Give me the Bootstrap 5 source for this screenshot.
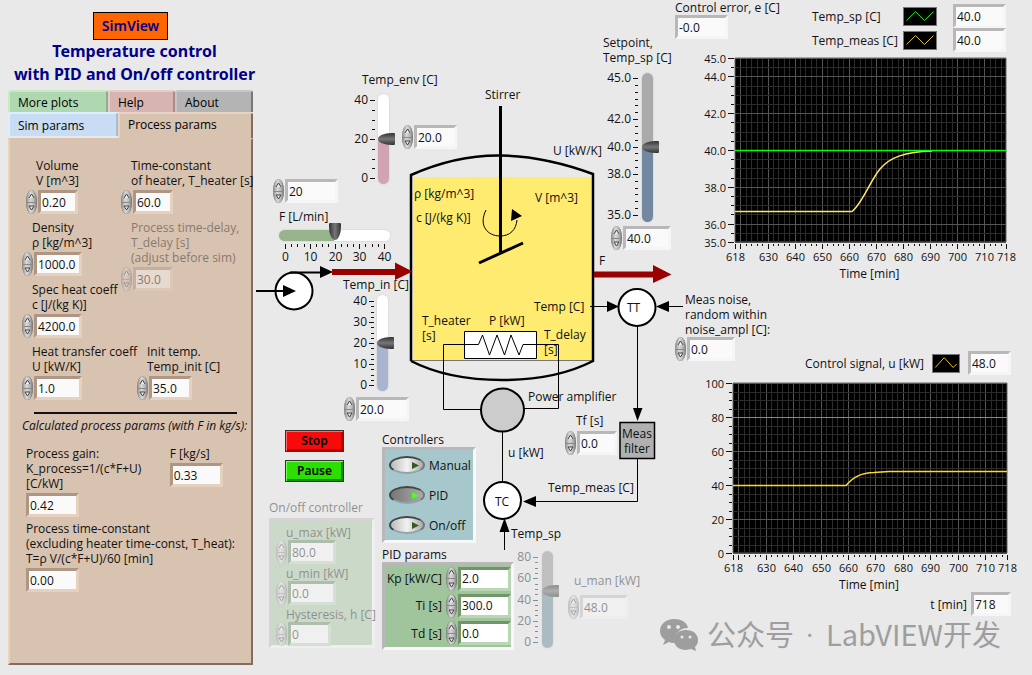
<!DOCTYPE html>
<html lang="en">
<head>
<meta charset="utf-8">
<meta name="viewport" content="width=device-width, initial-scale=1">
<title>SimView – Temperature control</title>
<link href="https://cdn.jsdelivr.net/npm/bootstrap@5.3.0/dist/css/bootstrap.min.css" rel="stylesheet">
<style>
:root{--hi:#f6f6f6;--lo:#b8b8b8;--face:#fafafa}
body{background:#e9e9e9;color:#111;font:12px/15px "Open Sans","Noto Sans",sans-serif}
label,legend,text{white-space:nowrap}
legend{font-size:12px;line-height:15px;float:none;margin:0}
svg text{font:12px "Open Sans","Noto Sans",sans-serif;fill:#111}
svg .tick{font-size:11px}
.simulator{display:grid;grid-template-columns:261px 414px minmax(0,1fr);min-height:100vh}

/* title and tabs */
.masthead{padding-top:12px}
.brand-tag{background:#f60;border:1px solid #000;color:#00008b;font:600 14px/26px "Noto Sans","Open Sans",sans-serif;width:75px}
.headline{color:#00008b;font:700 16px/23px "Noto Sans",sans-serif;white-space:nowrap}
.tab-btn{border:2px solid;border-bottom:0;text-align:left;padding:0 8px;height:22px;line-height:19px;border-radius:3px 3px 0 0}
.tab-green{background:#b0d8b0;border-color:#c8e8c8 #8cb08c #c8e8c8 #c8e8c8;width:100px}
.tab-pink{background:#d8b4b0;border-color:#e8ccca #ac8c8a #e8ccca #e8ccca;width:67px}
.tab-gray{background:#b4b4b4;border-color:#c6c6c6 #777 #c6c6c6 #c6c6c6;flex:1}
.tab-blue{background:#c8dcf4;border-color:#def #a8bcd8 #def #def;width:110px;height:24px}
.tab-tan{background:#d8c2b0;border-color:#e8d2c2 #846c60 #e8d2c2 #e8d2c2;flex:1;height:26px;padding-bottom:4px}
.tab-face{background:#d8c2b0;border:2px solid;border-color:#d8c2b0 #846c60 #846c60 #e8d2c2;--hi:#e6d0be;--lo:#ad9683;min-height:527px}
.params{display:grid;grid-template-columns:99px 1fr;row-gap:6px;padding-top:18px}
.params .num{margin-top:2px}
.tall{grid-row:span 2}
.rule{border-top:2px solid #111;opacity:1;margin:12px 14px 4px 24px}
.results{margin-top:13px}
.results .readout{margin-top:2px}

/* numeric field */
.num{display:flex;align-items:center;gap:1px}
.num input,.readout{border:3px solid;border-color:var(--lo) var(--hi) var(--hi) var(--lo);background:var(--face);height:24px;padding:0 0 0 1px;color:#111;min-width:0;font-size:12px;line-height:18px;border-radius:0}
.spin{display:flex;flex-direction:column;width:11px;height:24px;flex:none;border-radius:50%;overflow:hidden;background:linear-gradient(90deg,#8c8c8c,#d8d8d8 40%,#bbb 70%,#777);box-shadow:inset 0 0 1px #555}
.spin button{border:0;background:none;flex:1;padding:0;line-height:0}
.spin button+button{border-top:1px solid #888}
.spin svg{width:7px;height:6px}
.w40{width:40px}.w43{width:43px}.w48{width:48px}.w53{width:53px}
.off{opacity:.42}
.lbl{padding-left:10px}

/* buttons and panels */
.act{width:59px;height:22px;border:1px solid #333;font:600 12px/18px "Noto Sans","Open Sans",sans-serif;padding:0}
.act-stop{background:#f80a0a;box-shadow:inset 1px 1px #ff6a6a,inset -2px -2px #a80000}
.act-pause{background:#2be000;box-shadow:inset 1px 1px #7bff5c,inset -2px -2px #168c00}
.bevel{border:3px solid;border-color:#b8b8b8 #f8f8f8 #f8f8f8 #b8b8b8}
.bench{padding:430px 0 0 8px;gap:7px}
.bench-a{width:106px}
.bench-b{padding-top:2px}
.ctl{background:#a6c8cc;width:94px;height:96px}
.pid{background:#a0c49c;width:132px;height:88px;--lo:#6f9569;--hi:#b9d6b5;--face:#fff}
.onoff-set{margin-top:18px}
.onoff{background:#a0c49c;height:130px;margin-top:3px;--lo:#5f8559;--hi:#b9d6b5}
.onoff .num{margin-bottom:2px}
.sw{appearance:none;width:36px;height:18px;margin:0;border-radius:50%;border:2px solid;border-color:#444 #777 #8fa5a8 #444;background:url("data:image/svg+xml,%3Csvg xmlns='http://www.w3.org/2000/svg' viewBox='0 0 8 8'%3E%3Cpath d='M0 0L8 4L0 8z' fill='%23345a20'/%3E%3C/svg%3E") 21px 4px/7px 7px no-repeat,linear-gradient(90deg,#bbb,#f2f2f2 50%,#aaa)}
.sw:checked{background:url("data:image/svg+xml,%3Csvg xmlns='http://www.w3.org/2000/svg' viewBox='0 0 8 8'%3E%3Cpath d='M0 0L8 4L0 8z' fill='%234cff20'/%3E%3C/svg%3E") 21px 4px/7px 7px no-repeat,linear-gradient(90deg,#777,#aaa)}

/* process diagram: free canvas */
.canvas-svg{position:absolute;left:0;top:0;width:414px;height:675px;overflow:visible;pointer-events:none}
.pin{position:absolute}
.p-env{left:141px;top:125px}.p-f{left:12px;top:179px}.p-tin{left:83px;top:397px}
.p-sp{left:350px;top:226px}.p-tf{left:304px;top:431px}.p-man{left:307px;top:595px}
.l-env{left:101px;top:72px}.l-f{left:18px;top:209px}.l-tin{left:82px;top:277px}
.l-sp{left:342px;top:35px}.l-tf{left:315px;top:413px}.l-man{left:313px;top:573px}
.slide{appearance:none;height:11px;border-radius:6px;background:linear-gradient(90deg,var(--fill) 50%,var(--rest,#fff) 50%);box-shadow:0 0 1px 1px #ddd;margin:0}
.slide::-webkit-slider-thumb{appearance:none;width:12px;height:17px;background:linear-gradient(90deg,#333,#777 50%,#333);border-radius:50% 50% 1px 1px/80% 80% 1px 1px;margin-top:5px}
.upright{transform-origin:0 0;transform:rotate(-90deg)}
.s-env{left:117px;top:184px;width:90px;--fill:#d0a4b4}
.s-tin{left:116px;top:391px;width:96px;--fill:#a8b4d0}
.s-sp{left:381px;top:222px;width:149px;--fill:#7288a0;--rest:#aaa}
.s-man{left:281px;top:648px;width:97px;--fill:#708c9c;--rest:#999;opacity:.5;background:linear-gradient(90deg,var(--fill) 60%,var(--rest) 60%)}
.s-f{left:18px;top:230px;width:111px;--fill:#98b48c}
.s-f::-webkit-slider-thumb{border-radius:1px 1px 50% 50%/1px 1px 80% 80%;margin-top:-8px}

/* charts */
.plots{padding-right:26px}
.legend-grid{display:grid;grid-template-columns:91px 34px 69px;align-items:center}
.swatch{background:#000;border:1px solid #777;width:34px;height:19px;display:block}
.swatch-sm{width:28px}
.plot{display:block;width:calc(100% + 26px);height:auto;overflow:visible}
.noise{padding-top:7px;height:94px}
.wider{margin-right:-5px}
.watermark{position:absolute;right:31px;top:614px;color:#9e9e9e;font:29px/38px "Noto Sans CJK SC",sans-serif;pointer-events:none;white-space:pre}
.dot{font-family:Roboto,sans-serif;padding:0 5px}
</style>
</head>
<body>
<main class="simulator position-relative">

  <aside class="ps-2">
    <div class="masthead d-flex flex-column align-items-center">
      <div class="brand-tag text-center me-2">SimView</div>
      <h1 class="headline text-center mb-0">Temperature control<br>with PID and On/off controller</h1>
    </div>
    <div role="tablist" class="tabs pe-2">
      <div class="d-flex mt-1">
        <button class="tab-btn tab-green" role="tab">More plots</button>
        <button class="tab-btn tab-pink" role="tab">Help</button>
        <button class="tab-btn tab-gray" role="tab">About</button>
      </div>
      <div class="d-flex">
        <button class="tab-btn tab-blue" role="tab">Sim params</button>
        <button class="tab-btn tab-tan" role="tab" aria-selected="true">Process params</button>
      </div>
      <div class="tab-face" role="tabpanel">
        <div class="params ps-2 ms-1">
          <div class="ms-1"><label class="lbl" for="vol">Volume<br>V [m^3]</label><div class="num"><input id="vol" class="w40" value="0.20"></div></div>
          <div><label class="lbl" for="thea">Time-constant<br>of heater, T_heater [s]</label><div class="num"><input id="thea" class="w40" value="60.0"></div></div>
          <div><label class="lbl" for="den">Density<br>ρ [kg/m^3]</label><div class="num"><input id="den" class="w48" value="1000.0"></div></div>
          <div class="tall off"><label class="lbl" for="tdel">Process time-delay,<br>T_delay [s]<br>(adjust before sim)</label><div class="num"><input id="tdel" class="w40" value="30.0" disabled></div></div>
          <div><label class="lbl" for="spec">Spec heat coeff<br>c [J/(kg K)]</label><div class="num"><input id="spec" class="w48" value="4200.0"></div></div>
          <div><label class="lbl" for="htc">Heat transfer coeff<br>U [kW/K]</label><div class="num"><input id="htc" class="w48" value="1.0"></div></div>
          <div class="ms-3"><label class="lbl" for="tini">Init temp.<br>Temp_init [C]</label><div class="num"><input id="tini" class="w43" value="35.0"></div></div>
        </div>
        <hr class="rule">
        <div class="fst-italic text-nowrap ms-2 ps-1">Calculated process params (with F in kg/s):</div>
        <div class="results d-flex ms-3">
          <div class="flex-fill"><label for="kp0">Process gain:<br>K_process=1/(c*F+U)<br>[C/kW]</label><input id="kp0" class="readout w53 d-block" value="0.42" readonly></div>
          <div class="flex-fill"><label for="fkg">F [kg/s]</label><input id="fkg" class="readout w53 d-block" value="0.33" readonly></div>
        </div>
        <div class="results ms-3 mt-1"><label for="tau">Process time-constant<br>(excluding heater time-const, T_heat):<br>T=ρ V/(c*F+U)/60 [min]</label><input id="tau" class="readout w53 d-block" value="0.00" readonly></div>
      </div>
    </div>
  </aside>

  <section class="position-relative">
    <div class="bench d-flex">
      <div class="bench-a">
        <div class="d-flex flex-column gap-2 ms-3">
          <button class="act act-stop">Stop</button>
          <button class="act act-pause">Pause</button>
        </div>
        <fieldset class="off onoff-set" disabled>
          <legend>On/off controller</legend>
          <div class="bevel onoff ps-1 pt-1">
            <label class="lbl" for="umax">u_max [kW]</label><div class="num"><input id="umax" class="w48" value="80.0"></div>
            <label class="lbl" for="umin">u_min [kW]</label><div class="num"><input id="umin" class="w48" value="0.0"></div>
            <label class="lbl" for="hys">Hysteresis, h [C]</label><div class="num"><input id="hys" class="w43" value="0"></div>
          </div>
        </fieldset>
      </div>
      <div class="bench-b">
        <fieldset>
          <legend>Controllers</legend>
          <div class="bevel ctl d-flex flex-column justify-content-around">
            <div class="d-flex align-items-center gap-1 ps-1"><input class="sw" type="radio" name="mode" id="m1"><label for="m1">Manual</label></div>
            <div class="d-flex align-items-center gap-1 ps-1"><input class="sw" type="radio" name="mode" id="m2" checked><label for="m2">PID</label></div>
            <div class="d-flex align-items-center gap-1 ps-1"><input class="sw" type="radio" name="mode" id="m3"><label for="m3">On/off</label></div>
          </div>
        </fieldset>
        <fieldset class="mt-1">
          <legend>PID params</legend>
          <div class="bevel pid d-flex flex-column justify-content-around">
            <div class="d-flex align-items-center justify-content-end gap-1"><label for="kp">Kp [kW/C]</label><div class="num"><input id="kp" class="w53" value="2.0"></div></div>
            <div class="d-flex align-items-center justify-content-end gap-1"><label for="ti">Ti [s]</label><div class="num"><input id="ti" class="w53" value="300.0"></div></div>
            <div class="d-flex align-items-center justify-content-end gap-1"><label for="td">Td [s]</label><div class="num"><input id="td" class="w53" value="0.0"></div></div>
          </div>
        </fieldset>
      </div>
    </div>

    <svg class="canvas-svg" viewBox="261 0 414 675" fill="none" stroke="#000" aria-label="Process diagram">
      <path d="M413 177H592V360H413z" fill="#ffeb70" stroke="none"/>
      <path d="M411 360.500H593" stroke="#777"/>
      <path d="M411 361V175Q456 155 500 155.500T593 174V361Q556 380 502 380T411 361" stroke-width="2.500"/>
      <path d="M500.500 106V253M479 263L523 243" stroke-width="3"/>
      <path d="M486 210C478 226 488 236 500 236C510 236 516 230 517 220"/>
      <path d="M512 209L522 216L511 221z" fill="#000" stroke="none"/>
      <circle cx="294" cy="291" r="18.500" fill="#fff" stroke-width="2"/>
      <path d="M256 291H285M290 272.500H322" stroke-width="2"/>
      <path d="M283 285L296 291L283 297zM320 266L333 272L320 278z" fill="#000" stroke="none"/>
      <path d="M332 269H395V262.500L412.500 271.500L395 280V275H332zM594 271.500H653V265L671.500 274.500L653 283V277.500H594z" fill="#900" stroke="none"/>
      <path d="M590 306.500H610M668 306.500H683M637.500 326V410M637.500 458V501.500H534M504.500 550V530M502.500 431V483"/>
      <circle cx="637" cy="307.500" r="18.500" fill="#fff" stroke-width="2"/>
      <circle cx="502.500" cy="500.500" r="18.500" fill="#fff" stroke-width="2"/>
      <path d="M607 301L619 306.500L607 312zM669 301L656 306.500L669 312zM633 408H642.500L637.500 421zM523 501.500L536 496V507zM504.500 518L499.500 532H509.500z" fill="#000" stroke="none"/>
      <path d="M620 422.500H654.500V458.500H620z" fill="#b0b0b0" stroke-width="1.500"/>
      <path d="M464.500 331.500H536.500V358.500H464.500z" fill="#fff"/>
      <path d="M481 409.500H443.500V344.500H478.500L482.500 335L489.500 355L497 335L504.500 355L511 335L519 355L523 344.500H558.500V408.500H524"/>
      <circle cx="502.500" cy="410" r="21.500" fill="#ccc" stroke-width="2"/>
      <g stroke="none">
        <text x="485" y="99">Stirrer</text><text x="553" y="155">U [kW/K]</text>
        <text x="414" y="198">ρ [kg/m^3]</text><text x="416" y="222">c [J/(kg K)]</text><text x="535" y="202">V [m^3]</text>
        <text x="599" y="265">F</text><text x="534" y="311">Temp [C]</text><text x="489" y="325">P [kW]</text>
        <text x="422" y="325">T_heater</text><text x="422" y="340">[s]</text>
        <text x="544" y="339">T_delay</text><text x="544" y="354">[s]</text>
        <text x="528" y="401">Power amplifier</text><text x="508" y="457">u [kW]</text>
        <text x="627" y="312">TT</text><text x="495" y="506">TC</text>
        <text x="622" y="438">Meas</text><text x="624" y="453">filter</text>
        <text x="548" y="492">Temp_meas [C]</text><text x="511" y="538">Temp_sp</text>
      </g>
      <g id="scales"></g>
    </svg>

    <label class="pin l-env" for="r-env">Temp_env [C]</label>
    <input class="pin slide upright s-env" id="r-env" type="range" min="0" max="40" value="20">
    <div class="pin num p-env"><input class="w43" value="20.0" aria-label="Temp_env"></div>
    <div class="pin num p-f"><input class="w53" value="20" aria-label="F"></div>
    <label class="pin l-f" for="r-f">F [L/min]</label>
    <input class="pin slide s-f" id="r-f" type="range" min="0" max="40" value="20">
    <label class="pin l-tin" for="r-tin">Temp_in [C]</label>
    <input class="pin slide upright s-tin" id="r-tin" type="range" min="0" max="40" value="20">
    <div class="pin num p-tin"><input class="w53" value="20.0" aria-label="Temp_in"></div>
    <label class="pin l-sp" for="r-sp">Setpoint,<br>Temp_sp [C]</label>
    <input class="pin slide upright s-sp" id="r-sp" type="range" min="35" max="45" value="40">
    <div class="pin num p-sp"><input class="w48" value="40.0" aria-label="Setpoint"></div>
    <label class="pin l-tf" for="tf">Tf [s]</label>
    <div class="pin num p-tf"><input class="w40" id="tf" value="0.0"></div>
    <input class="pin slide upright s-man" id="r-man" type="range" min="0" max="80" value="48" aria-label="u_man" disabled>
    <label class="pin off l-man" for="uman">u_man [kW]</label>
    <div class="pin off num p-man"><input class="w48" id="uman" value="48.0" disabled></div>
  </section>

  <section class="plots">
    <div class="d-flex justify-content-between">
      <div><label for="err">Control error, e [C]</label><input id="err" class="readout w53 d-block" value="-0.0" readonly></div>
      <div class="legend-grid pt-1">
        <label for="o1">Temp_sp [C]</label>
        <svg class="swatch" viewBox="0 0 34 19" fill="none" stroke="#2f2"><path d="M2 14L12 4L22 14L32 4"/></svg>
        <input id="o1" class="readout w53 ms-3" value="40.0" readonly>
        <label for="o2">Temp_meas [C]</label>
        <svg class="swatch" viewBox="0 0 34 19" fill="none" stroke="#ffe040"><path d="M2 14L12 4L22 14L32 4"/></svg>
        <input id="o2" class="readout w53 ms-3" value="40.0" readonly>
      </div>
    </div>
    <svg class="plot" id="plot1" viewBox="675 52 357 233" role="img" aria-label="Temperature plot"></svg>
    <div class="noise d-flex justify-content-between align-items-start">
      <div><label class="lbl" for="noise">Meas noise,<br>random within<br>noise_ampl [C]:</label><div class="num"><input id="noise" class="w48" value="0.0"></div></div>
      <div class="wider d-flex align-items-center gap-2 align-self-end pb-1">
        <label for="o3">Control signal, u [kW]</label>
        <svg class="swatch swatch-sm" viewBox="0 0 28 19" fill="none" stroke="#ffd820"><path d="M2 14L12 3L22 14L26 10"/></svg>
        <input id="o3" class="readout w43" value="48.0" readonly>
      </div>
    </div>
    <svg class="plot" id="plot2" viewBox="675 379 357 213" role="img" aria-label="Control signal plot"></svg>
    <div class="wider d-flex justify-content-end align-items-center gap-1"><label for="tm">t [min]</label><input id="tm" class="readout w40" value="718" readonly></div>
  </section>

  <div class="watermark d-flex align-items-center gap-2">
    <svg width="40" height="34" viewBox="0 0 40 34" fill="#9e9e9e"><path d="M15 1C7 1 1 6 1 13c0 4 2 7 5 9l-2 5 6-3c2 1 4 1 6 1-2-9 5-15 13-15C28 4 22 1 15 1z"/><path d="M27 12c-7 0-12 4-12 10s5 10 12 10l5-1 5 2-1-4c2-2 3-4 3-7 0-6-5-10-12-10z"/><g fill="#e9e9e9"><circle cx="10" cy="9" r="2"/><circle cx="19" cy="9" r="2"/><circle cx="23" cy="19" r="1.500"/><circle cx="31" cy="19" r="1.500"/></g></svg>
    <span>公众号<span class="dot"> · </span>LabVIEW开发</span>
  </div>
</main>

<script>
// stepper buttons in front of each numeric field
document.querySelectorAll('.num').forEach(n => {
  const s = document.createElement('span');
  s.className = 'spin';
  s.innerHTML = '<button aria-label="Increase"><svg viewBox="0 0 7 6" fill="#eee" stroke="#444"><path d="M1 5L3.500 1L6 5"/></svg></button>' +
    '<button aria-label="Decrease"><svg viewBox="0 0 7 6" fill="#eee" stroke="#444"><path d="M1 1H6L3.500 5z"/></svg></button>';
  const i = n.querySelector('input');
  n.prepend(s);
  s.querySelectorAll('button').forEach((b, k) => {
    b.disabled = i.disabled;
    b.onclick = () => { const d = (i.value.split('.')[1] || '').length; i.value = (parseFloat(i.value) + (k ? -1 : 1)).toFixed(d); };
  });
});

// tick scales beside the sliders
const line = (x1, y1, x2, y2, c) => `<path d="M${x1} ${y1}L${x2} ${y2}" stroke="${c}"/>`;
const label = (x, y, t, a, c, k) => `<text class="${k || ''}" x="${x}" y="${y}" text-anchor="${a}" stroke="none" style="fill:${c}">${t}</text>`;
function scaleV(x, yLo, yHi, lo, hi, step, majors, d, c) {
  let s = '';
  const y = v => yLo + (v - lo) / (hi - lo) * (yHi - yLo);
  for (let v = lo; v <= hi; v += step) s += line(x - 2, Math.round(y(v)) + .5, x + 1, Math.round(y(v)) + .5, c);
  majors.forEach(v => s += line(x - 4, Math.round(y(v)) + .5, x + 1, Math.round(y(v)) + .5, c) + label(x - 6, Math.round(y(v)) + 4, v.toFixed(d), 'end', c));
  return s;
}
let sc = scaleV(374, 178, 100, 0, 40, 5, [0, 20, 40], 0, '#111')
  + scaleV(373, 385, 301, 0, 40, 2.5, [0, 10, 20, 30, 40], 0, '#111')
  + scaleV(637, 215, 78, 35, 45, .5, [35, 38, 40, 42, 45], 1, '#111')
  + scaleV(537, 642, 557, 0, 80, 5, [0, 20, 40, 60, 80], 0, '#8d8d8d');
for (let v = 0; v <= 40; v += 2.5) {
  const x = Math.round(285 + v * 2.475) + .5, m = v % 10 === 0;
  sc += line(x, 244, x, m ? 249 : 247, '#111') + (m ? label(x, 261, v, 'middle', '#111') : '');
}
document.getElementById('scales').innerHTML = sc;

// strip charts
function chart(id, b, y0, y1, step, majors, d, bright, curves) {
  const X = t => b.l + (t - 618) / 100 * (b.r - b.l), Y = v => b.b - (v - y0) / (y1 - y0) * (b.b - b.t);
  const p = v => Math.round(v) + .5;
  let s = `<path d="M${b.l} ${b.t}H${b.r}V${b.b}H${b.l}z" fill="#000" stroke="#666"/>`;
  for (let t = 620; t < 718; t += 2) s += line(p(X(t)), b.t, p(X(t)), b.b, t % 10 ? '#2b2b2b' : '#555');
  for (let v = y0; v <= y1; v += step) {
    const m = majors.includes(v);
    s += line(b.l, p(Y(v)), b.r, p(Y(v)), v === bright ? '#888' : m ? '#555' : '#2b2b2b');
    s += line(m ? b.l - 7 : b.l - 4, p(Y(v)), b.l - 1, p(Y(v)), '#111');
    if (m) s += label(b.l - 9, p(Y(v)) + 4, v.toFixed(d), 'end', '#111', 'tick');
  }
  for (let t = 618; t <= 718; t += 2) {
    const m = t % 10 === 0 || t === 618 || t === 718;
    s += line(p(X(t)), b.b + 2, p(X(t)), b.b + (m ? 7 : 4), '#111');
    if (m && t !== 620) s += label(p(X(t)), b.b + 19, t, 'middle', '#111', 'tick');
  }
  s += label((b.l + b.r) / 2 - 1, b.b + 36, 'Time [min]', 'middle', '#111');
  curves.forEach(([c, q]) => s += `<path d="${q}" fill="none" stroke="${c}" stroke-width="1.500"/>`);
  document.getElementById(id).innerHTML = s;
}
chart('plot1', {l: 735, r: 1006, t: 58, b: 242}, 35, 45, .5, [35, 36, 38, 40, 42, 44, 45], 1, null, [
  ['#ffe860', 'M735 211.500H852C862 204 870 181 880 169S905 152 932 151'],
  ['#0f0', 'M735 150.500H1006']]);
chart('plot2', {l: 733, r: 1007, t: 383, b: 553}, 0, 100, 5, [0, 20, 40, 60, 80, 100], 0, 80, [
  ['#ffd820', 'M733 485.500H846C854 476 862 473 874 472.500L889 471.500H1007']]);
</script>
<script src="https://cdn.jsdelivr.net/npm/bootstrap@5.3.0/dist/js/bootstrap.bundle.min.js"></script>
</body>
</html>
